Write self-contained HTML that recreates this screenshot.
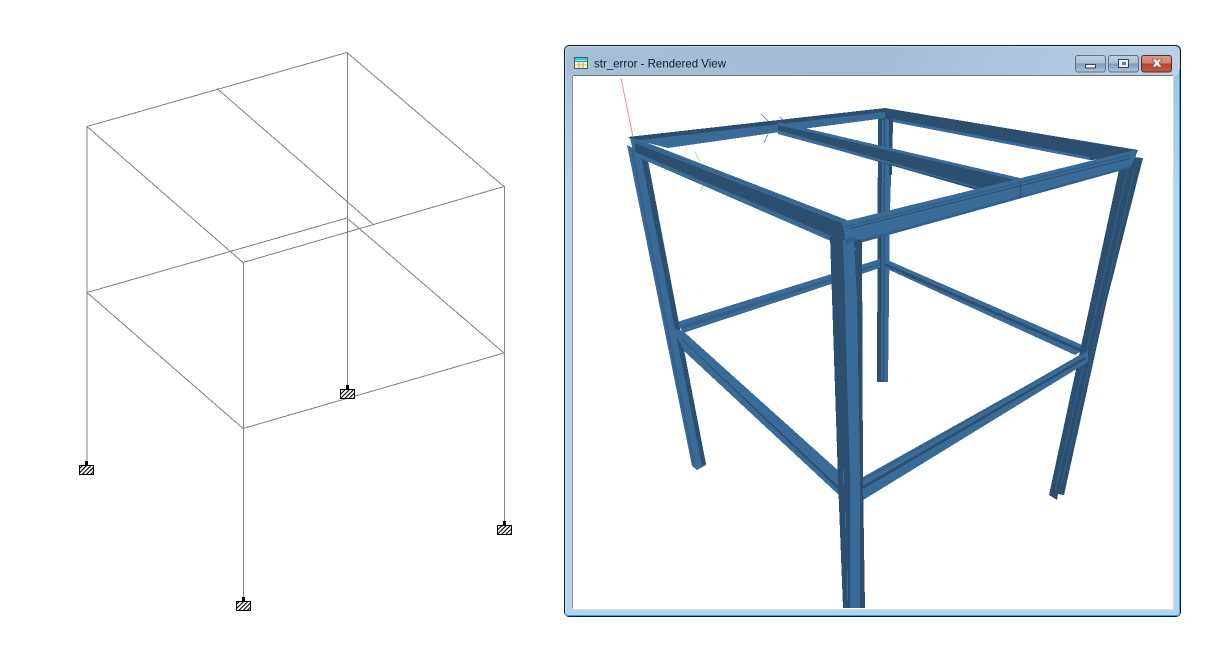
<!DOCTYPE html>
<html>
<head>
<meta charset="utf-8">
<style>
html,body{margin:0;padding:0;background:#fff;width:1208px;height:650px;overflow:hidden}
svg{position:absolute;left:0;top:0;display:block}
.w line{stroke:#808080;stroke-width:1;fill:none;shape-rendering:crispEdges}
.l{fill:#3a6a96}
.d{fill:#2c4f70}
.m{fill:#336088}
</style>
</head>
<body>
<svg width="1208" height="650" viewBox="0 0 1208 650" xmlns="http://www.w3.org/2000/svg">
<defs>
<pattern id="h" width="3" height="3" patternUnits="userSpaceOnUse" patternTransform="rotate(45)">
<rect width="3" height="3" fill="#fff"/><rect width="1.1" height="3" fill="#000"/>
</pattern>
<linearGradient id="fr" x1="0" y1="0" x2="0" y2="1">
<stop offset="0" stop-color="#9db8d3"/><stop offset=".055" stop-color="#aac4de"/><stop offset=".25" stop-color="#b8d2ee"/><stop offset="1" stop-color="#b6d2ef"/>
</linearGradient>
<linearGradient id="tb" x1="0" y1="0" x2="1" y2="0">
<stop offset="0" stop-color="#a6bfd8" stop-opacity=".9"/><stop offset=".5" stop-color="#a2bcd6" stop-opacity=".9"/><stop offset="1" stop-color="#bcd3e8" stop-opacity=".9"/>
</linearGradient>
<linearGradient id="btn" x1="0" y1="0" x2="0" y2="1">
<stop offset="0" stop-color="#bcd0e2"/><stop offset=".48" stop-color="#a5bdd5"/><stop offset=".5" stop-color="#7f9db9"/><stop offset="1" stop-color="#a9c5de"/>
</linearGradient>
<linearGradient id="cl" x1="0" y1="0" x2="0" y2="1">
<stop offset="0" stop-color="#dd9a90"/><stop offset=".48" stop-color="#cf7d72"/><stop offset=".5" stop-color="#b8442f"/><stop offset="1" stop-color="#bf5a40"/>
</linearGradient>
</defs>

<!-- wireframe -->
<g class="w">
<line x1="87" y1="126.500" x2="347" y2="52.500"/>
<line x1="347" y1="52.500" x2="504" y2="186.500"/>
<line x1="87" y1="126.500" x2="243" y2="262.500"/>
<line x1="243" y1="262.500" x2="504" y2="186.500"/>
<line x1="217" y1="88.500" x2="374" y2="225"/>
<line x1="87" y1="292.500" x2="347" y2="218"/>
<line x1="347" y1="218" x2="504" y2="353"/>
<line x1="87" y1="292.500" x2="243" y2="428.500"/>
<line x1="243" y1="428.500" x2="504" y2="353"/>
<line x1="87" y1="126" x2="87" y2="462"/>
<line x1="243.500" y1="262" x2="243.500" y2="598"/>
<line x1="347.500" y1="52" x2="347.500" y2="385"/>
<line x1="504.500" y1="186" x2="504.500" y2="522"/>
</g>
<!-- supports -->
<g stroke="#000" stroke-width="1" shape-rendering="crispEdges">
<rect x="79.500" y="465.500" width="14" height="9" fill="url(#h)"/>
<rect x="236.500" y="601.500" width="14" height="9" fill="url(#h)"/>
<rect x="340.500" y="389.500" width="14" height="9" fill="url(#h)"/>
<rect x="497.500" y="525.500" width="14" height="9" fill="url(#h)"/>
</g>
<g fill="#000">
<rect x="85" y="461" width="3" height="5"/>
<rect x="242" y="597" width="3" height="5"/>
<rect x="346" y="385" width="3" height="5"/>
<rect x="503" y="521" width="3" height="5"/>
</g>

<!-- window frame -->
<rect x="564.500" y="45.500" width="616" height="571" rx="5" fill="url(#fr)" stroke="#111a22"/>
<rect x="565.500" y="46.500" width="614" height="29" rx="4" fill="url(#tb)"/>
<path d="M565.500 615V51a4 4 0 0 1 4-4.500H1176" fill="none" stroke="#dcebf7" stroke-opacity=".6"/>
<line x1="566" y1="615.500" x2="1180" y2="615.500" stroke="#06b6ea"/>
<line x1="1179.500" y1="70" x2="1179.500" y2="615" stroke="#06b6ea"/>
<rect x="572.500" y="75.500" width="601" height="534" fill="#fff" stroke="#d4d8dc"/>
<line x1="573" y1="75.500" x2="1173" y2="75.500" stroke="#6f747a"/>
<line x1="572.500" y1="76" x2="572.500" y2="608" stroke="#8b9096"/>

<!-- icon -->
<rect x="574.500" y="57.500" width="13" height="11" fill="#f4f0d8" stroke="#5a5a50"/>
<rect x="575" y="58" width="12" height="2.500" fill="#10d8ee"/>
<rect x="575" y="61" width="12" height="1" fill="#777"/>
<rect x="575" y="64" width="12" height="1.500" fill="#e9dc5c"/>
<line x1="579" y1="61" x2="579" y2="68" stroke="#a8a890"/>
<line x1="583" y1="61" x2="583" y2="68" stroke="#a8a890"/>

<text x="594" y="67.500" font-family="'Liberation Sans',sans-serif" font-size="12" fill="#12202c" textLength="132" lengthAdjust="spacingAndGlyphs">str_error - Rendered View</text>

<!-- buttons -->
<rect x="1075.500" y="55.500" width="30" height="16.500" rx="2.500" fill="url(#btn)" stroke="#5f6f84"/>
<rect x="1108.500" y="55.500" width="30" height="16.500" rx="2.500" fill="url(#btn)" stroke="#5f6f84"/>
<rect x="1141.500" y="55.500" width="30" height="16.500" rx="2.500" fill="url(#cl)" stroke="#5e2a2a"/>
<rect x="1085.500" y="64.500" width="10" height="3.500" fill="#e8eef3" stroke="#3a4654"/>
<rect x="1118.500" y="59.500" width="10" height="8" fill="#e8eef3" stroke="#3a4654"/>
<rect x="1122" y="62" width="4" height="3" fill="#66809c"/>
<path d="M1152 59h4l1 1.500 1-1.500h4l-3 4 3 4h-4l-1-1.500-1 1.500h-4l3-4z" fill="#f2f0f0" stroke="#7a3a34" stroke-width=".6"/>

<!-- axes -->
<g fill="none" stroke-width="1" shape-rendering="crispEdges">
<line x1="621" y1="78" x2="633" y2="137" stroke="#f98a92"/>
<line x1="695" y1="152" x2="700" y2="162" stroke="#8df58d"/>
<line x1="703" y1="185" x2="701" y2="191" stroke="#8df58d"/>
<line x1="761" y1="114" x2="768" y2="121" stroke="#8f86f2"/>
<line x1="768" y1="134" x2="764" y2="143" stroke="#8f86f2"/>
<line x1="780" y1="117" x2="784" y2="121" stroke="#8f86f2"/>
</g>

<g shape-rendering="crispEdges">
<!-- back column -->
<polygon class="l" points="878,113 893,116 890,210 888,382 877,382"/>
<polygon class="d" points="878,113 885,113 884,382 877,382"/>
<polygon class="d" points="889,120 893,120 892,175 889,175"/>
<polygon class="l" points="882,120 884,120 883,380 881,380"/>

<!-- lower back beams -->
<polygon class="l" points="677,322 880,259 880,268 683,333"/>
<polygon class="m" points="680,326 880,263 880,265 682,329"/>
<polygon class="l" points="885,259 1087,347 1075,355 885,268"/>
<polygon class="d" points="885,263 1081,349 1079,351 885,266"/>

<!-- left column -->
<polygon class="l" points="627,145 647,155 706,465 697,470 692,466"/>
<polygon class="d" points="641,156 647,158 706,464 702,466"/>
<polygon class="m" points="631,150 633,150 695,464 693,464"/>

<!-- right column -->
<polygon class="d" points="1120,165 1130,157 1143,158 1107,300 1064,495 1058,494 1057,500 1049,495"/>
<polygon class="m" points="1127,170 1128,170 1056,490 1055,490"/>
<polygon class="m" points="1134,170 1135,170 1062,485 1061,485"/>

<!-- lower front beams -->
<polygon class="l" points="672,328 683,331 841,473 841,497 685,352"/>
<polygon class="d" points="680,338 682,339 840,488 840,491"/>
<polygon class="l" points="1088,351 863,477 860,502 1088,362"/>
<polygon class="d" points="1085,357 863,486 863,489 1086,359"/>
<polygon class="m" points="1085,352 863,479 863,481 1085,354"/>

<!-- back-left top beam -->
<polygon class="l" points="632,139 885,110 886,118 780,132 668,148"/>
<polygon class="d" points="628,137 885,108 885,112 632,141"/>

<!-- back-right top beam -->
<polygon class="d" points="885,108 1138,150 1135,157 1091,160 893,122 885,118"/>
<polygon class="l" points="893,119 1090,157 1090,160 893,122"/>

<!-- middle top beam -->
<polygon class="d" points="778,122 1020,178 1019,183 977,190 778,133"/>
<polygon class="l" points="778,122 1020,178 1020,181 778,125"/>
<polygon class="l" points="778,130 977,187 985,190 778,134"/>

<!-- front-left top beam -->
<polygon class="l" points="630,138 640,140 847,220 848,238 833,242 642,159 634,155"/>
<polygon class="d" points="635,143 847,225 847,237 836,238 635,152"/>
<polygon class="m" points="634,140 847,222 847,223 634,141"/>

<!-- front-right top beam -->
<polygon class="l" points="842,222 1135,150 1136,156 1130,168 860,243 846,240"/>
<polygon class="m" points="845,226 1130,154 1130,156 845,228"/>
<polygon class="d" points="850,228 1130,158 1130,159 850,229"/>
<polygon class="m" points="860,240 1130,166 1130,168 860,243"/>
<rect x="1020" y="181" width="1" height="16" fill="#2c4f70"/>

<!-- front column -->
<polygon class="d" points="830,236 843,238 852,241 862,239 863,480 865,608 843,608 838,480"/>
<polygon class="l" points="843,240 854,240 857,300 860,480 860,608 850,608 850,480 845,300"/>
<polygon class="m" points="845,238 857,236 857,240 846,244"/>
<polygon class="l" points="848,248 857,248 855,251 850,251"/>
<polygon class="l" points="852,489 858,488 860,490 855,493"/>
<polygon class="l" points="853,499 859,498 859,501 855,504"/>
<rect x="843" y="470" width="1" height="14" fill="#3a6a96"/>
<rect x="845" y="513" width="1" height="14" fill="#3a6a96"/>
<rect x="847" y="570" width="1" height="30" fill="#3a6a96"/>
</g>
</svg>
</body>
</html>
